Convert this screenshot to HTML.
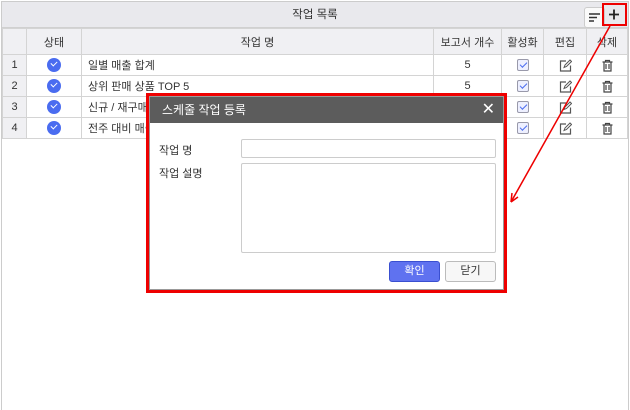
<!DOCTYPE html>
<html><head><meta charset="utf-8"><style>
*{box-sizing:border-box;margin:0;padding:0}
body{width:630px;height:410px;background:#fff;font-family:"Liberation Sans","Noto Sans CJK KR",sans-serif;font-size:11px;color:#333;position:relative;overflow:hidden}
.wrap{position:absolute;left:1px;top:1px;width:628px;height:409px;border:1px solid #ccc;border-bottom:none}
.title{height:26px;background:#e9e9ed;border-bottom:1px solid #d0d0d0;text-align:center;line-height:26px;font-size:11.5px}
table{border-collapse:collapse;width:626px;table-layout:fixed}
td,th{border:1px solid #d4d4d4;height:21px;padding:0;text-align:center;font-weight:normal}
th{background:#f0f0f3;height:26px}
td.n{background:#f0f0f3}
td.l{text-align:left;padding-left:6px}
td svg{vertical-align:middle}
.chk{display:inline-block;width:14px;height:14px;border-radius:50%;background:#4a6cf0;vertical-align:middle;position:relative}
.chk:after{content:"";position:absolute;left:4px;top:3px;width:5px;height:3px;border-left:1.5px solid #fff;border-bottom:1.5px solid #fff;transform:rotate(-45deg)}
.cb{display:inline-block;width:12px;height:12px;border:1px solid #99a;border-radius:2px;vertical-align:middle;background:#eef0ff;position:relative}
.cb:after{content:"";position:absolute;left:2px;top:2px;width:6px;height:3px;border-left:1.3px solid #4a6cf0;border-bottom:1.3px solid #4a6cf0;transform:rotate(-45deg)}
.btn{position:absolute;top:5px;width:21px;height:21px;border:1px solid #ccc;border-radius:3px;background:#fafafa}
.dlg{position:absolute;left:146px;top:93px;width:361px;height:200px;border:3px solid #e00;}
.dlgi{position:absolute;left:0;top:0;right:0;bottom:0;border:1px solid #999;background:#fff}
.dh{height:26px;background:#5c5c5c;color:#fff;font-size:12px;line-height:26px;padding-left:12px;position:relative}
.lab{position:absolute;left:9px;font-size:11px}
.inp{position:absolute;left:91px;width:255px;border:1px solid #ccc;border-radius:2px}
.b{position:absolute;top:164px;width:51px;height:21px;border-radius:3px;text-align:center;line-height:19px;font-size:11px}
</style></head><body>
<div class="wrap">
<div class="title">작업 목록</div>
<div class="btn" style="left:582px"><svg width="19" height="19"><path d="M4 6h11M4 9.5h8M4 13h5" stroke="#333" stroke-width="1.6"/></svg></div>
<table>
<colgroup><col style="width:24px"><col style="width:55px"><col style="width:352px"><col style="width:68px"><col style="width:42px"><col style="width:43px"><col></colgroup>
<tr><th></th><th>상태</th><th>작업 명</th><th>보고서 개수</th><th>활성화</th><th>편집</th><th>삭제</th></tr>
<tr><td class="n">1</td><td><span class="chk"></span></td><td class="l">일별 매출 합계</td><td>5</td><td><span class="cb"></span></td><td><svg width="13" height="13"><path d="M7 2H1.5v10h10V6.5" fill="none" stroke="#555" stroke-width="1.2"/><path d="M5 8.5l1-2.5 5-5 1.5 1.5-5 5z" fill="none" stroke="#555" stroke-width="1"/></svg></td><td><svg width="13" height="13"><path d="M1.5 3h10M4.5 3V1.5h4V3M3 3v9h7V3M5 5v5M8 5v5" fill="none" stroke="#444" stroke-width="1.2"/></svg></td></tr>
<tr><td class="n">2</td><td><span class="chk"></span></td><td class="l">상위 판매 상품 TOP 5</td><td>5</td><td><span class="cb"></span></td><td><svg width="13" height="13"><path d="M7 2H1.5v10h10V6.5" fill="none" stroke="#555" stroke-width="1.2"/><path d="M5 8.5l1-2.5 5-5 1.5 1.5-5 5z" fill="none" stroke="#555" stroke-width="1"/></svg></td><td><svg width="13" height="13"><path d="M1.5 3h10M4.5 3V1.5h4V3M3 3v9h7V3M5 5v5M8 5v5" fill="none" stroke="#444" stroke-width="1.2"/></svg></td></tr>
<tr><td class="n">3</td><td><span class="chk"></span></td><td class="l">신규 / 재구매</td><td>5</td><td><span class="cb"></span></td><td><svg width="13" height="13"><path d="M7 2H1.5v10h10V6.5" fill="none" stroke="#555" stroke-width="1.2"/><path d="M5 8.5l1-2.5 5-5 1.5 1.5-5 5z" fill="none" stroke="#555" stroke-width="1"/></svg></td><td><svg width="13" height="13"><path d="M1.5 3h10M4.5 3V1.5h4V3M3 3v9h7V3M5 5v5M8 5v5" fill="none" stroke="#444" stroke-width="1.2"/></svg></td></tr>
<tr><td class="n">4</td><td><span class="chk"></span></td><td class="l">전주 대비 매출</td><td>5</td><td><span class="cb"></span></td><td><svg width="13" height="13"><path d="M7 2H1.5v10h10V6.5" fill="none" stroke="#555" stroke-width="1.2"/><path d="M5 8.5l1-2.5 5-5 1.5 1.5-5 5z" fill="none" stroke="#555" stroke-width="1"/></svg></td><td><svg width="13" height="13"><path d="M1.5 3h10M4.5 3V1.5h4V3M3 3v9h7V3M5 5v5M8 5v5" fill="none" stroke="#444" stroke-width="1.2"/></svg></td></tr>
</table>
</div>
<div style="position:absolute;left:602px;top:3px;width:25px;height:23px;border:2px solid #e00"></div>
<svg style="position:absolute;left:0;top:0" width="630" height="410"><path d="M609 14.5h10M614 9.5v10" stroke="#222" stroke-width="1.8"/><path d="M610 26L511 202" stroke="#e00" stroke-width="1.5"/><path d="M511 202l1-9M511 202l7-5" stroke="#e00" stroke-width="1.5"/></svg>
<div class="dlg"><div class="dlgi">
<div class="dh">스케줄 작업 등록<span style="position:absolute;right:8px;top:0;font-size:16px">✕</span></div>
<div class="lab" style="top:45px">작업 명</div>
<div class="lab" style="top:68px">작업 설명</div>
<div class="inp" style="top:42px;height:19px"></div>
<div class="inp" style="top:66px;height:90px"></div>
<div class="b" style="left:239px;background:#5f72f0;border:1px solid #3a4fd0;color:#fff">확인</div>
<div class="b" style="left:295px;background:#f7f7f7;border:1px solid #bbb">닫기</div>
</div></div>
</body></html>
